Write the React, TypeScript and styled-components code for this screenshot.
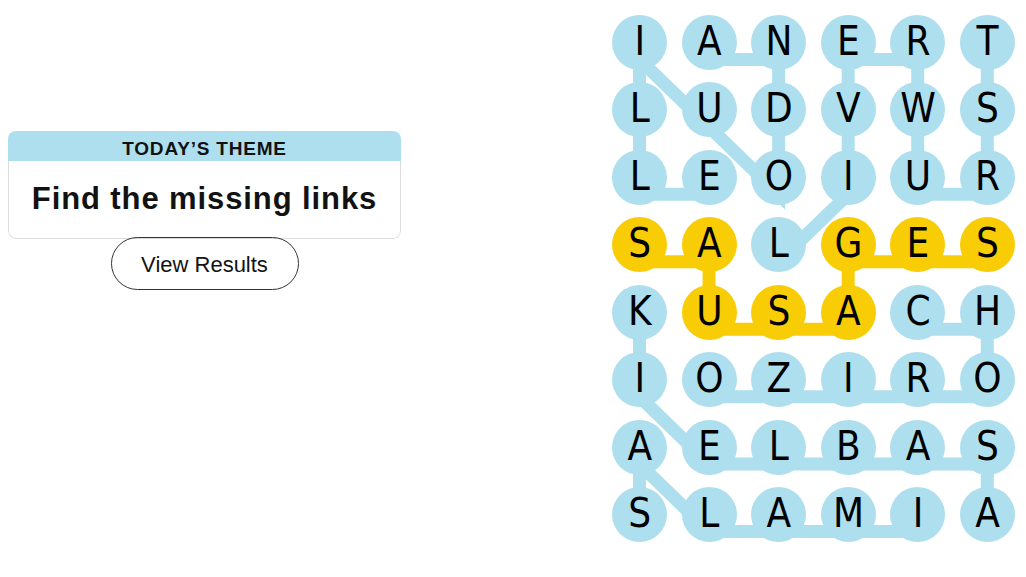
import React from "react";
import styled, { createGlobalStyle } from "styled-components";

const BLUE = "#aedfee";
const YELLOW = "#f8cd05";

const TILE = 55;
const COL_STEP = 69.56;
const ROW_STEP = 67.43;
const LINE_DROP = 17;

const GlobalStyle = createGlobalStyle`
  html, body {
    margin: 0;
    padding: 0;
    background: #ffffff;
  }

  body {
    font-family: "Liberation Sans", Arial, sans-serif;
    color: #121212;
  }
`;

const Page = styled.main`
  width: 1026px;
  height: 577px;
  box-sizing: border-box;
  padding: 15px 11px 0 8px;
  display: flex;
  justify-content: space-between;
  align-items: flex-start;
  overflow: hidden;
`;

const ThemePanel = styled.section`
  width: 393px;
  margin-top: 116px;
  display: flex;
  flex-direction: column;
  align-items: center;
`;

const ThemeCard = styled.div`
  width: 100%;
  border-radius: 8px;
  overflow: hidden;
`;

const ThemeHeader = styled.div`
  height: 30px;
  box-sizing: border-box;
  padding-top: 5px;
  background: ${BLUE};
  text-align: center;
  font-size: 19px;
  line-height: 25px;
  font-weight: 700;
  letter-spacing: 0.8px;
  text-transform: uppercase;
`;

const ThemeBody = styled.div`
  height: 78px;
  box-sizing: border-box;
  padding-top: 20px;
  border: 1px solid #dcdcdc;
  border-top: none;
  border-radius: 0 0 8px 8px;
  text-align: center;
`;

const ThemeTitle = styled.h1`
  margin: 0;
  font-size: 31px;
  font-weight: 700;
  letter-spacing: 0.9px;
  color: #121212;
`;

const ResultsButton = styled.button`
  margin-top: -2px;
  width: 188px;
  height: 53px;
  box-sizing: border-box;
  padding: 3px 0 0;
  border: 1px solid #333333;
  border-radius: 27px;
  background: transparent;
  font-family: "Liberation Sans", Arial, sans-serif;
  font-size: 22px;
  color: #121212;
  cursor: pointer;
`;

const Board = styled.div`
  position: relative;
  display: grid;
  grid-template-columns: repeat(6, ${TILE}px);
  grid-auto-rows: ${TILE}px;
  column-gap: ${COL_STEP - TILE}px;
  row-gap: ${ROW_STEP - TILE}px;
`;

const Links = styled.svg`
  position: absolute;
  left: 0;
  top: 0;
  width: 100%;
  height: 100%;
  overflow: visible;
  z-index: 0;
`;

const Tile = styled.div<{ $found: "word" | "spangram" }>`
  position: relative;
  z-index: 1;
  width: ${TILE}px;
  height: ${TILE}px;
  box-sizing: border-box;
  padding-bottom: 3px;
  border-radius: 50%;
  background: ${(p) => (p.$found === "spangram" ? YELLOW : BLUE)};
  display: flex;
  align-items: center;
  justify-content: center;
  font-family: "Liberation Sans Narrow", "DejaVu Sans Condensed", "Liberation Sans", sans-serif;
  font-size: 40px;
  color: #000000;
`;

const LETTERS = ["IANERT", "LUDVWS", "LEOIUR", "SALGES", "KUSACH", "IOZIRO", "AELBAS", "SLAMIA"];

type Cell = [number, number];

const WORDS: { word: string; spangram: boolean; path: Cell[] }[] = [
  { word: "ANDOUILLE", spangram: false, path: [[0, 1], [0, 2], [1, 2], [2, 2], [1, 1], [0, 0], [1, 0], [2, 0], [2, 1]] },
  { word: "LIVERWURST", spangram: false, path: [[3, 2], [2, 3], [1, 3], [0, 3], [0, 4], [1, 4], [2, 4], [2, 5], [1, 5], [0, 5]] },
  { word: "SAUSAGES", spangram: true, path: [[3, 0], [3, 1], [4, 1], [4, 2], [4, 3], [3, 3], [3, 4], [3, 5]] },
  { word: "CHORIZO", spangram: false, path: [[4, 4], [4, 5], [5, 5], [5, 4], [5, 3], [5, 2], [5, 1]] },
  { word: "KIELBASA", spangram: false, path: [[4, 0], [5, 0], [6, 1], [6, 2], [6, 3], [6, 4], [6, 5], [7, 5]] },
  { word: "SALAMI", spangram: false, path: [[7, 0], [6, 0], [7, 1], [7, 2], [7, 3], [7, 4]] },
];

const spangramCells = new Set(
  WORDS.filter((w) => w.spangram).flatMap((w) => w.path.map(([r, c]) => `${r}-${c}`))
);

const toPoints = (path: Cell[]) =>
  path
    .map(([r, c]) => {
      const x = TILE / 2 + c * COL_STEP;
      const y = TILE / 2 + r * ROW_STEP + LINE_DROP;
      return `${x.toFixed(2)},${y.toFixed(2)}`;
    })
    .join(" ");

const App: React.FC = () => {
  return (
    <>
      <GlobalStyle />
      <Page>
        <ThemePanel>
          <ThemeCard>
            <ThemeHeader>Today’s Theme</ThemeHeader>
            <ThemeBody>
              <ThemeTitle>Find the missing links</ThemeTitle>
            </ThemeBody>
          </ThemeCard>
          <ResultsButton>View Results</ResultsButton>
        </ThemePanel>

        <Board>
          <Links>
            {WORDS.map((w) => (
              <polyline
                key={w.word}
                points={toPoints(w.path)}
                fill="none"
                stroke={w.spangram ? YELLOW : BLUE}
                strokeWidth={13}
                strokeLinejoin="miter"
                strokeMiterlimit={4}
              />
            ))}
          </Links>
          {LETTERS.map((row, r) =>
            row.split("").map((letter, c) => (
              <Tile key={`${r}-${c}`} $found={spangramCells.has(`${r}-${c}`) ? "spangram" : "word"}>
                {letter}
              </Tile>
            ))
          )}
        </Board>
      </Page>
    </>
  );
};

export default App;
